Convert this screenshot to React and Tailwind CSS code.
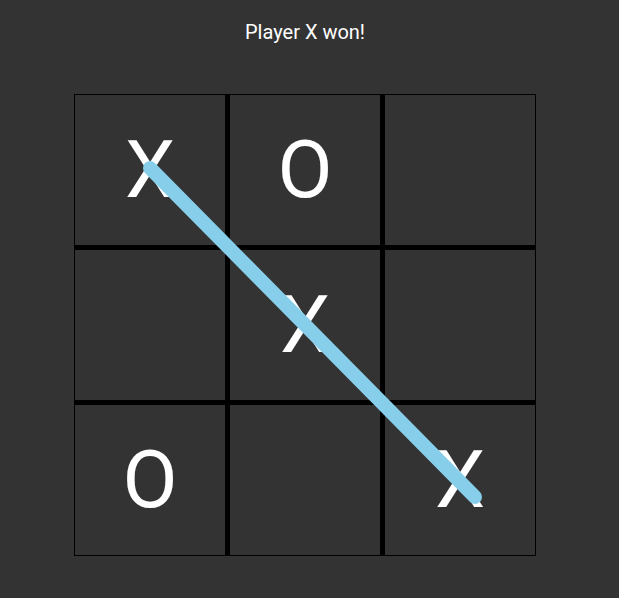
const board = ['X', 'O', '', '', 'X', '', 'O', '', 'X'];

export default function App() {
  return (
    <main className="min-h-[598px] w-full bg-[#333333] font-['Roboto',sans-serif] text-white">
      <div className="ml-[74px] w-[462px] pt-[20px]">
        <h1 className="text-center text-[20px] leading-[24px] font-normal">Player X won!</h1>
        <div className="relative mt-[50px] grid grid-cols-3 gap-[5px] border border-black bg-black">
          {board.map((v, i) => (
            <div key={i} className="flex h-[150px] items-center justify-center bg-[#333333] text-[80px] leading-none">
              {v}
            </div>
          ))}
          <svg className="absolute left-[-1px] top-[-1px]" width="462" height="462" viewBox="0 0 462 462">
            <line x1="76" y1="74" x2="401" y2="403" stroke="#87ceeb" strokeWidth="14" strokeLinecap="round" />
          </svg>
        </div>
      </div>
    </main>
  );
}
